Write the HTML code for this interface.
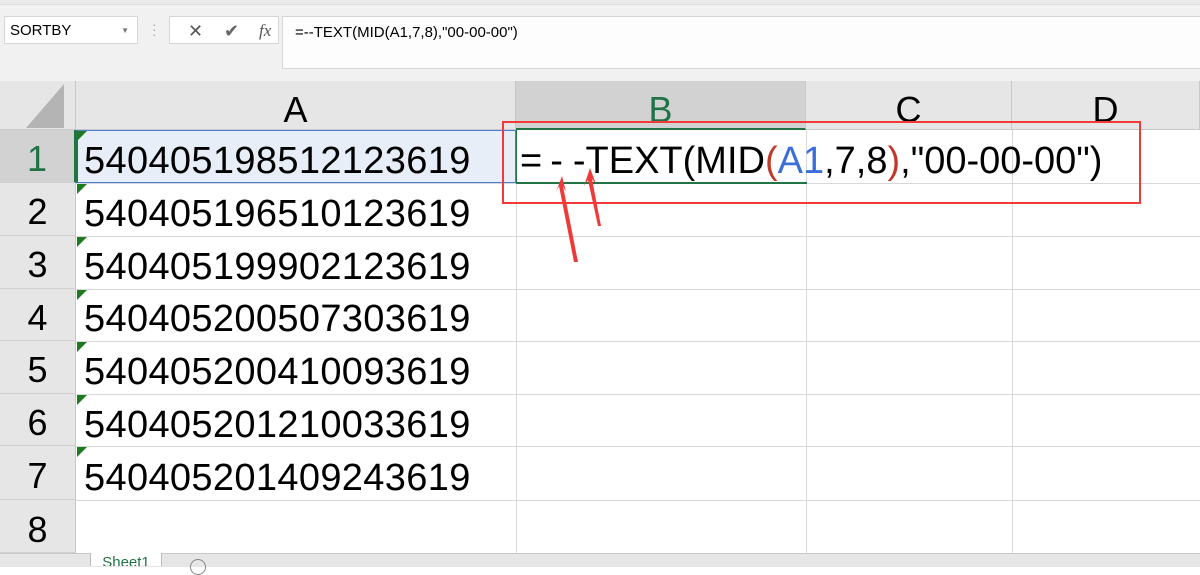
<!DOCTYPE html>
<html><head><style>
body{margin:0;width:1200px;height:566px;overflow:hidden;background:#fff;font-family:"Liberation Sans",sans-serif;position:relative}
.a{position:absolute}
.hd{position:absolute;top:81px;height:49px;background:#e6e6e6;border-right:1px solid #c8c8c8;font-size:36px;text-align:center;line-height:58px;box-sizing:border-box;border-bottom:1px solid #c8c8c8}
.rn{position:absolute;left:0;width:76px;background:#e6e6e6;border-bottom:1px solid #d0d0d0;box-sizing:border-box;font-size:36px;text-align:center;border-right:1px solid #c8c8c8}
.hl{position:absolute;left:76px;right:0;height:1px;background:#d8d8d8}
.vl{position:absolute;top:130px;height:423px;width:1px;background:#d8d8d8}
.num{position:absolute;left:84px;font-size:38px;line-height:38px;letter-spacing:0.35px}
.tri{position:absolute;left:77px;width:0;height:0;border-top:10px solid #1e7a1e;border-right:10px solid transparent}
</style></head><body>
<div class="a" style="left:0;top:0;width:1200px;height:81px;background:#f1f1f1"></div>
<div class="a" style="left:0;top:0;width:1200px;height:4px;background:#e9e9e9;border-bottom:1px solid #ddd"></div>
<div class="a" style="left:4px;top:16px;width:134px;height:28px;background:#fff;border:1px solid #d6d6d6;box-sizing:border-box;font-size:15px;line-height:28px;padding-left:5px">SORTBY<span style="position:absolute;right:8px;top:0;font-size:8px;color:#777">▼</span></div>
<div class="a" style="left:152px;top:22px;color:#aaa;font-size:14px;line-height:5px">·<br>·<br>·</div>
<div class="a" style="left:169px;top:16px;width:110px;height:28px;background:#fff;border:1px solid #d6d6d6;box-sizing:border-box;font-size:18px;line-height:28px;color:#555"><span style="position:absolute;left:18px">✕</span><span style="position:absolute;left:54px;color:#666">✔</span><span style="position:absolute;left:89px;font-family:'Liberation Serif';font-style:italic;font-size:17px">fx</span></div>
<div class="a" style="left:282px;top:16px;width:920px;height:53px;background:#fdfdfd;border:1px solid #d6d6d6;box-sizing:border-box;font-size:15px;line-height:32px;padding-left:12px">=--TEXT(MID(A1,7,8),"00-00-00")</div>
<div class="a" style="left:0;top:81px;width:76px;height:49px;background:#e6e6e6;border-right:1px solid #c8c8c8;border-bottom:1px solid #c8c8c8;box-sizing:border-box"></div>
<div class="a" style="left:26px;top:84px;width:0;height:0;border-bottom:44px solid #b4b4b4;border-left:38px solid transparent"></div>
<div class="hd" style="left:76px;width:440px">A</div>
<div class="hd" style="left:516px;width:290px;background:#d2d2d2;color:#217346;border-bottom:2px solid #217346">B</div>
<div class="hd" style="left:806px;width:206px">C</div>
<div class="hd" style="left:1012px;width:188px">D</div>
<div class="rn" style="top:130px;height:53px;line-height:58px;background:#d2d2d2;color:#217346;border-right:2px solid #217346">1</div>
<div class="rn" style="top:183px;height:53px;line-height:58px">2</div>
<div class="rn" style="top:236px;height:53px;line-height:58px">3</div>
<div class="rn" style="top:289px;height:52px;line-height:58px">4</div>
<div class="rn" style="top:341px;height:53px;line-height:58px">5</div>
<div class="rn" style="top:394px;height:52px;line-height:58px">6</div>
<div class="rn" style="top:446px;height:54px;line-height:60px">7</div>
<div class="rn" style="top:500px;height:53px;line-height:60px">8</div>
<div class="a" style="left:76px;top:130px;width:440px;height:53px;background:#e8eef8"></div>
<div class="hl" style="top:183px"></div><div class="hl" style="top:236px"></div><div class="hl" style="top:289px"></div><div class="hl" style="top:341px"></div><div class="hl" style="top:394px"></div><div class="hl" style="top:446px"></div><div class="hl" style="top:500px"></div>
<div class="vl" style="left:516px"></div><div class="vl" style="left:806px"></div><div class="vl" style="left:1012px"></div>
<div class="a" style="left:76px;top:130px;width:440px;height:53px;border:1px solid #4a7ed0;border-left:2px solid #217346;box-sizing:border-box"></div>
<div class="a" style="left:516px;top:130px;width:291px;height:54px;border-left:1px solid #217346;border-bottom:2px solid #217346;box-sizing:border-box"></div>
<div class="tri" style="top:131px"></div><div class="tri" style="top:184px"></div><div class="tri" style="top:237px"></div><div class="tri" style="top:290px"></div><div class="tri" style="top:342px"></div><div class="tri" style="top:395px"></div><div class="tri" style="top:447px"></div>
<div class="num" style="top:142px">540405198512123619</div>
<div class="num" style="top:195px">540405196510123619</div>
<div class="num" style="top:248px">540405199902123619</div>
<div class="num" style="top:300px">540405200507303619</div>
<div class="num" style="top:353px">540405200410093619</div>
<div class="num" style="top:406px">540405201210033619</div>
<div class="num" style="top:459px">540405201409243619</div>
<div class="a" style="left:520px;top:142px;font-size:38px;line-height:38px;white-space:nowrap">=<span style="margin-left:8px">-</span><span style="margin-left:10px">-</span>TEXT(MID<span style="color:#c0392b">(</span><span style="color:#3a6fd8">A1</span>,7,8<span style="color:#c0392b">)</span>,"00-00-00")</div>
<div class="a" style="left:502px;top:121px;width:639px;height:83px;border:2px solid #f03a3a;box-sizing:border-box"></div>
<svg class="a" style="left:0;top:0" width="1200" height="566">
<polygon points="574,262 559,186 556,192 562,176 566,192 563,186 578,262" fill="#f03a3a"/>
<polygon points="598,226 588,180 584,186 590,168 596,184 592,179 601,226" fill="#f03a3a"/>
</svg>
<div class="a" style="left:0;top:553px;width:1200px;height:13px;background:#e6e6e6;border-top:1px solid #c8c8c8"></div>
<div class="a" style="left:90px;top:553px;width:70px;height:13px;background:#fff;border-left:1px solid #bbb;border-right:1px solid #bbb;color:#217346;font-size:15px;line-height:20px;text-align:center;overflow:hidden">Sheet1</div>
<div class="a" style="left:190px;top:559px;width:14px;height:14px;border:1px solid #888;border-radius:50%"></div>
</body></html>
